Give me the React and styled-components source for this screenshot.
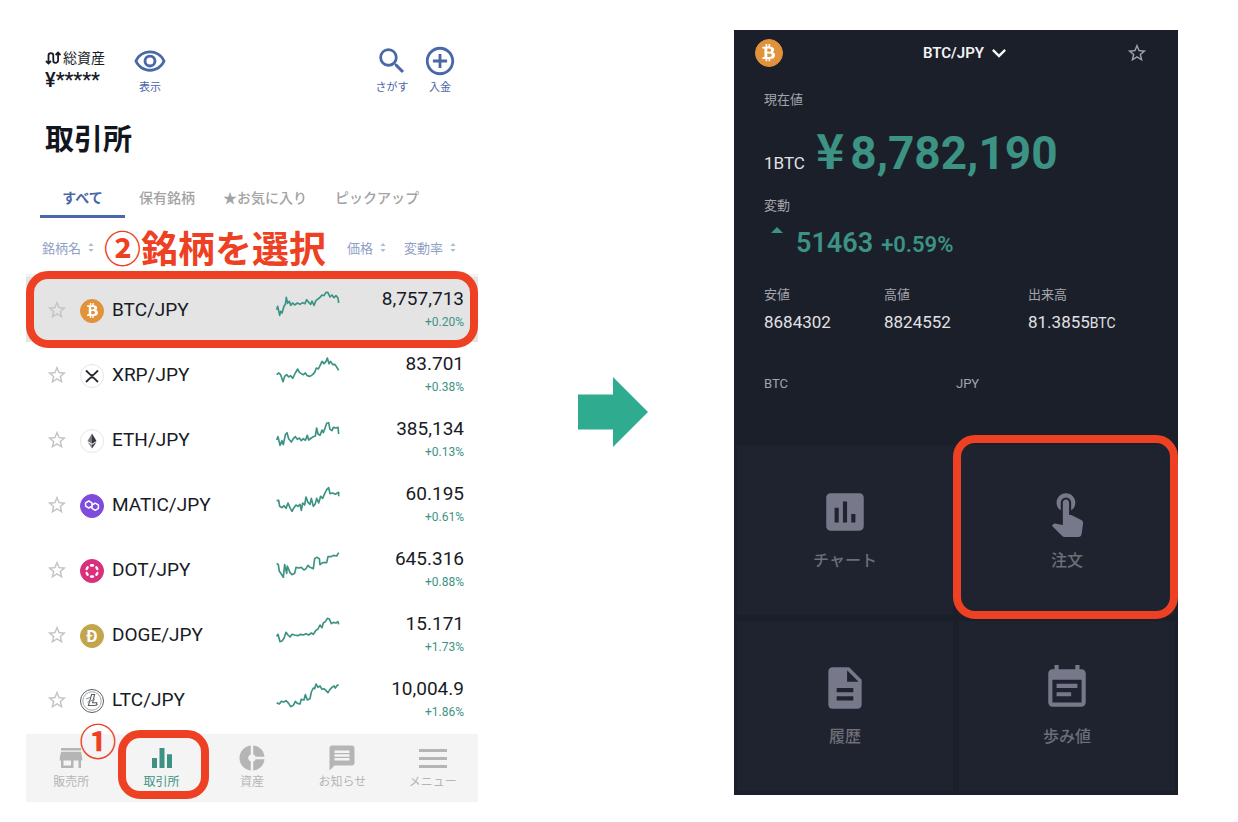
import React, { useState } from "react";
import styled, { createGlobalStyle } from "styled-components";
import {
  MdAssessment,
  MdDescription,
  MdDonutSmall,
  MdEqualizer,
  MdEventNote,
  MdKeyboardArrowDown,
  MdMessage,
  MdOutlineAddCircleOutline,
  MdOutlineRemoveRedEye,
  MdSearch,
  MdStarBorder,
  MdStore,
  MdTouchApp,
} from "react-icons/md";
import { FaBtc } from "react-icons/fa";

const GlobalStyle = createGlobalStyle`
  * {
    box-sizing: border-box;
  }
  body {
    margin: 0;
    background: #fff;
    color: #171b26;
    font-family: Roboto, "Noto Sans CJK JP", sans-serif;
  }
  button {
    margin: 0;
    padding: 0;
    border: none;
    background: none;
    color: inherit;
    font: inherit;
    cursor: pointer;
  }
  a {
    color: inherit;
    text-decoration: none;
  }
  svg {
    display: block;
  }
`;

const RED = "#ee4023";
const BLUE = "#4a67a8";
const GREEN = "#3c9384";

const Page = styled.main`
  display: grid;
  grid-template-columns: minmax(0, 452fr) minmax(0, 256fr) minmax(0, 444fr);
  align-items: start;
  padding: 30px 60px 20px 26px;
`;

// red frame drawn around the thing to press
const Ring = styled.span`
  position: absolute;
  z-index: 1;
  inset: ${(props) => props.$inset};
  border: 8px solid ${RED};
  border-radius: 22px;
  pointer-events: none;
`;

// css for the market list
const Market = styled.section`
  display: flex;
  flex-direction: column;
`;
const TopBar = styled.header`
  display: flex;
  align-items: flex-start;
  height: 88px;
  padding: 14px 18px 0 19px;
`;
const Assets = styled.div`
  width: 85px;
  padding-top: 2px;
`;
const AssetsLabel = styled.div`
  display: flex;
  align-items: center;
  gap: 2px;
  font-size: 14px;
  line-height: 24px;
`;
const AssetsValue = styled.div`
  font-size: 20px;
  font-weight: 500;
  line-height: 20px;
`;
const Tools = styled.div`
  display: flex;
  gap: 8px;
  margin-left: auto;
`;
const Tool = styled.button`
  display: flex;
  flex-direction: column;
  align-items: center;
  gap: 2px;
  width: 40px;
  color: ${BLUE};
  font-size: 11px;
  line-height: 16px;
  svg {
    width: 34px;
    height: 34px;
  }
`;
const Title = styled.h1`
  margin: 0;
  padding-left: 19px;
  color: #12151d;
  font-size: 29px;
  font-weight: 700;
  line-height: 44px;
`;
const Tabs = styled.nav`
  display: flex;
  padding: 18px 14px 0;
`;
const Tab = styled.button`
  height: 38px;
  padding: 0 14px 2px;
  color: ${(props) => (props.$active ? BLUE : "#a3a3a3")};
  border-bottom: 3px solid ${(props) => (props.$active ? BLUE : "transparent")};
  font-size: 14px;
  font-weight: ${(props) => (props.$active ? 700 : 500)};
  white-space: nowrap;
  &:first-child {
    min-width: 85px;
  }
`;
const SortRow = styled.div`
  position: relative;
  display: flex;
  align-items: center;
  gap: 18px;
  height: 59px;
  padding: 3px 22px 0 16px;
  border-bottom: 3px solid #f2f2f2;
`;
const Sort = styled.button`
  display: flex;
  align-items: center;
  gap: 7px;
  color: #8f9fc6;
  font-size: 13px;
  &:first-child {
    margin-right: auto;
  }
`;
const Step = styled.strong`
  position: absolute;
  z-index: 2;
  color: ${RED};
  font-size: 37px;
  font-weight: 700;
  line-height: 37px;
  white-space: nowrap;
`;
const StepTwo = styled(Step)`
  top: 14px;
  left: 78px;
`;
const StepOne = styled(Step)`
  top: -9px;
  right: 0;
`;
const List = styled.ul`
  margin: 0;
  padding: 0 0 2px;
  list-style: none;
`;
const Row = styled.li`
  position: relative;
  display: grid;
  grid-template-columns: 34px 24px minmax(0, 172fr) 64px minmax(0, 124fr);
  align-items: center;
  height: 65px;
  padding: 0 14px 0 20px;
  background: ${(props) => (props.$active ? "#e4e4e4" : "#fff")};
`;
const Star = styled.button`
  justify-self: start;
  color: ${(props) => props.$color};
`;
const Pair = styled.a`
  padding: 0 8px;
  font-size: 19px;
`;
const Spark = styled.svg`
  width: 64px;
  height: 28px;
  margin-bottom: 12px;
  fill: none;
  stroke: ${GREEN};
  stroke-width: 5;
  stroke-linejoin: round;
`;
const Quote = styled.div`
  text-align: right;
`;
const Price = styled.div`
  font-size: 19px;
  line-height: 24px;
`;
const Change = styled.div`
  color: ${GREEN};
  font-size: 12px;
  line-height: 22px;
`;
const BottomNav = styled.nav`
  display: grid;
  grid-template-columns: repeat(5, minmax(0, 1fr));
  height: 68px;
  background: #f4f4f4;
`;
const NavItem = styled.a`
  position: relative;
  display: flex;
  flex-direction: column;
  align-items: center;
  padding-top: 9px;
  color: ${(props) => (props.$active ? GREEN : "#b5b5b5")};
  font-size: 12px;
  line-height: 19px;
  white-space: nowrap;
  svg {
    width: 30px;
    height: 30px;
  }
`;
const Bars = styled.span`
  display: flex;
  flex-direction: column;
  justify-content: center;
  gap: 5px;
  width: 28px;
  height: 30px;
  i {
    height: 3px;
    background: currentColor;
  }
`;

const ArrowCell = styled.div`
  align-self: center;
  justify-self: center;
  padding: 0 0 8px 14px;
`;

// css for the pair detail
const Detail = styled.section`
  background: #1b1f2a;
  color: #e2e2e4;
`;
const DetailBar = styled.header`
  display: grid;
  grid-template-columns: 168fr auto 135fr;
  align-items: center;
  height: 46px;
  padding: 0 30px 0 21px;
`;
const PairSelect = styled.button`
  display: flex;
  align-items: center;
  gap: 1px;
  color: #f4f4f4;
  font-size: 15px;
  font-weight: 600;
`;
const DetailStar = styled(Star)`
  justify-self: end;
`;
const Body = styled.div`
  padding: 14px 20px 0 30px;
`;
const Label = styled.div`
  color: #a3a5ab;
  font-size: 13px;
  line-height: 20px;
`;
const Current = styled.div`
  display: flex;
  align-items: baseline;
  height: 72px;
  margin-bottom: 14px;
  padding-top: 11px;
  line-height: 84px;
`;
const Unit = styled.span`
  margin-right: 11px;
  font-size: 17px;
`;
const Yen = styled.span`
  margin-right: 6px;
  color: ${GREEN};
  font-family: "Noto Sans CJK JP", sans-serif;
  font-size: 48px;
  font-weight: 700;
  line-height: 48px;
`;
const Amount = styled.span`
  color: ${GREEN};
  font-size: 46px;
  font-weight: 700;
  line-height: 48px;
`;
const Move = styled.div`
  display: flex;
  align-items: baseline;
  gap: 8px;
  height: 55px;
  margin-bottom: 14px;
  padding-left: 7px;
  color: ${GREEN};
  font-size: 27px;
  font-weight: 600;
  line-height: 55px;
`;
const UpMark = styled.i`
  align-self: flex-start;
  width: 12px;
  height: 6px;
  margin: 11px 5px 0 0;
  background: ${GREEN};
  clip-path: polygon(50% 0, 100% 100%, 0 100%);
`;
const MoveRate = styled.span`
  font-size: 22px;
`;
const Stats = styled.div`
  display: grid;
  grid-template-columns: 120fr 144fr 130fr;
`;
const Stat = styled.div`
  font-size: 17px;
  line-height: 34px;
  small {
    font-size: 14px;
  }
`;
const Balances = styled.div`
  display: grid;
  grid-template-columns: 192fr 202fr;
  height: 105px;
  padding-top: 34px;
`;
const Tiles = styled.div`
  display: grid;
  grid-template-columns: repeat(2, minmax(0, 1fr));
  gap: 6px;
  padding: 0 3px 4px;
`;
const Tile = styled.a`
  position: relative;
  display: flex;
  flex-direction: column;
  align-items: center;
  justify-content: center;
  gap: 12px;
  height: 170px;
  background: #1f2330;
  color: #77798a;
  font-size: 16px;
  font-weight: 500;
  line-height: 24px;
  svg {
    width: 50px;
    height: 50px;
  }
`;
const TileLabel = styled.span`
  color: #6d6e77;
`;

const CoinDisc = styled.span`
  display: flex;
  align-items: center;
  justify-content: center;
  width: ${(props) => props.$size}px;
  height: ${(props) => props.$size}px;
  border: 1px solid ${(props) => props.$line || props.$bg};
  border-radius: 50%;
  background: ${(props) => props.$bg};
  color: #fff;
  font-size: 17px;
  font-weight: 700;
  line-height: 22px;
  ${Row} & {
    margin-top: 2px;
  }
`;

function Coin({ code, size = 24 }) {
  if (code === "BTC") {
    return (
      <CoinDisc $size={size} $bg="#e1923a">
        <FaBtc size={size * 0.62} />
      </CoinDisc>
    );
  }
  if (code === "XRP") {
    return (
      <CoinDisc $size={size} $bg="#fff" $line="#e6e6e6">
        <svg width="22" height="22" viewBox="0 0 22 22" fill="none" stroke="#23262d" strokeWidth="1.8">
          <path d="M5 5.5 9 9.4q2 1.8 4 0l4-3.9M5 17l4-3.9q2-1.8 4 0l4 3.9" />
        </svg>
      </CoinDisc>
    );
  }
  if (code === "ETH") {
    return (
      <CoinDisc $size={size} $bg="#fff" $line="#e6e6e6">
        <svg width="22" height="22" viewBox="0 0 22 22">
          <path d="M11 3.5 6.5 11 11 13.7z" fill="#77797f" />
          <path d="M11 3.5 15.5 11 11 13.7z" fill="#33363f" />
          <path d="M6.5 12 11 18.5v-3.8z" fill="#8b8d93" />
          <path d="M15.5 12 11 18.5v-3.8z" fill="#3a3d46" />
        </svg>
      </CoinDisc>
    );
  }
  if (code === "MATIC") {
    return (
      <CoinDisc $size={size} $bg="#7f4bdc">
        <svg width="22" height="22" viewBox="0 0 22 22" fill="none" stroke="#fff" strokeWidth="1.5" strokeLinejoin="round">
          <path d="M11 11.2 7.8 13 4.6 11.2V7.8L7.8 6 11 7.8v5.6l3.2 1.9 3.2-1.9V10l-3.2-1.8L11 10" />
        </svg>
      </CoinDisc>
    );
  }
  if (code === "DOT") {
    return (
      <CoinDisc $size={size} $bg="#d9307c">
        <svg width="22" height="22" viewBox="-11 -11 22 22" fill="#fff">
          {[0, 60, 120, 180, 240, 300].map((deg) => (
            <ellipse key={deg} cx="0" cy="-5.6" rx="2.3" ry="1.3" transform={`rotate(${deg})`} />
          ))}
        </svg>
      </CoinDisc>
    );
  }
  if (code === "DOGE") {
    return (
      <CoinDisc $size={size} $bg="#c3a54c">
        Ð
      </CoinDisc>
    );
  }
  return (
    <CoinDisc $size={size} $bg="#fff" $line="#5c5e63">
      <svg width="22" height="22" viewBox="0 0 22 22" fill="none">
        <circle cx="11" cy="11" r="9.2" stroke="#a5a7ab" strokeWidth="1" />
        <path d="M10.6 4.5h3l-2 8.3h4.2l-.7 2.7H7.4z" stroke="#5c5e63" strokeWidth="1.1" />
        <path d="m6.5 12.2 7.5-3M5 9l4-1.6M14 15.5l3-1.2" stroke="#8d8f94" strokeWidth="1" />
      </svg>
    </CoinDisc>
  );
}

function SortMark() {
  return (
    <svg width="6" height="9" viewBox="0 0 6 9" fill="#a9bfcd">
      <path d="M3 0 5.6 3H.4zM3 9 .4 6h5.2z" />
    </svg>
  );
}

const coins = [
  {
    code: "BTC",
    price: "8,757,713",
    change: "+0.20%",
    line: "2,59 5,49 8,62 11,76 14,64 18,69 24,49 28,43 31,22 35,40 40,34 44,46 50,39 56,45 64,39 72,43 80,38 87,41 92,29 98,37 104,43 108,33 114,46 120,31 126,27 132,22 138,15 144,17 150,7 156,8 162,21 168,15 174,23 180,17 186,24 188,39",
  },
  {
    code: "XRP",
    price: "83.701",
    change: "+0.38%",
    line: "2,59 8,54 14,59 21,80 26,64 32,59 38,66 44,62 50,70 58,54 65,42 70,52 76,56 82,59 88,54 94,62 102,64 110,59 116,52 121,39 127,42 132,32 138,19 144,26 150,19 154,9 159,26 164,19 170,29 176,28 182,36 188,46",
  },
  {
    code: "ETH",
    price: "385,134",
    change: "+0.13%",
    line: "2,60 6,50 12,76 18,62 22,74 28,44 33,38 38,56 46,66 52,56 58,50 64,58 70,54 76,62 82,56 88,61 94,46 98,60 106,54 112,50 118,48 122,24 126,42 132,46 138,30 142,38 148,22 152,10 158,8 162,28 168,32 172,22 180,24 186,22 188,42",
  },
  {
    code: "MATIC",
    price: "60.195",
    change: "+0.61%",
    line: "2,47 8,46 11,64 18,68 24,62 30,70 36,54 42,68 48,79 54,68 60,60 66,64 72,58 76,76 80,54 86,60 90,36 96,52 102,58 106,40 112,64 118,56 122,40 128,54 134,34 140,40 146,26 152,14 158,8 162,26 170,24 178,28 184,24 188,22 188,34",
  },
  {
    code: "DOT",
    price: "645.316",
    change: "+0.88%",
    line: "2,40 7,44 10,64 16,72 22,82 26,44 32,70 34,48 42,68 48,74 56,70 60,52 68,54 76,52 84,60 90,56 96,46 102,52 112,56 116,26 122,22 130,26 132,44 140,38 152,38 156,20 166,20 172,16 182,18 188,8",
  },
  {
    code: "DOGE",
    price: "15.171",
    change: "+1.73%",
    line: "2,64 6,58 12,80 18,78 24,70 30,52 36,60 42,66 48,58 56,60 66,62 74,58 82,60 90,56 98,60 106,54 112,58 120,46 126,42 132,30 138,38 142,24 148,20 154,10 160,12 166,26 172,22 180,24 186,20 188,28",
  },
  {
    code: "LTC",
    price: "10,004.9",
    change: "+1.86%",
    line: "2,68 10,72 16,64 24,66 30,62 38,70 44,80 52,76 58,64 64,70 72,72 76,58 84,60 88,44 94,60 102,56 106,36 112,24 116,26 120,12 126,22 132,18 138,28 144,26 150,32 156,38 162,28 168,22 174,18 178,24 184,16 188,14",
  },
];

const tabs = ["すべて", "保有銘柄", "★お気に入り", "ピックアップ"];

function MarketList() {
  const [tab, setTab] = useState(tabs[0]);

  return (
    <Market>
      <TopBar>
        <Assets>
          <AssetsLabel>
            <svg width="16" height="14" viewBox="0 0 16 14" fill="none" stroke="#171b26" strokeWidth="1.8">
              <path d="M3.5 11.5V4.5a2.4 2.4 0 0 1 4.8 0v5a2.4 2.4 0 0 0 4.8 0V2.5" />
              <path d="M1 10 3.5 12.5 6 10M10.6 4 13.1 1.5 15.6 4" />
            </svg>
            総資産
          </AssetsLabel>
          <AssetsValue>¥*****</AssetsValue>
        </Assets>
        <Tool type="button">
          <MdOutlineRemoveRedEye />
          表示
        </Tool>
        <Tools>
          <Tool type="button">
            <MdSearch />
            さがす
          </Tool>
          <Tool type="button">
            <MdOutlineAddCircleOutline />
            入金
          </Tool>
        </Tools>
      </TopBar>
      <Title>取引所</Title>
      <Tabs>
        {tabs.map((name) => (
          <Tab key={name} type="button" $active={name === tab} onClick={() => setTab(name)}>
            {name}
          </Tab>
        ))}
      </Tabs>
      <SortRow>
        <Sort type="button">
          銘柄名 <SortMark />
        </Sort>
        <Sort type="button">
          価格 <SortMark />
        </Sort>
        <Sort type="button">
          変動率 <SortMark />
        </Sort>
        <StepTwo>②銘柄を選択</StepTwo>
      </SortRow>
      <List>
        {coins.map((coin) => (
          <Row key={coin.code} $active={coin.code === "BTC"}>
            <Star type="button" aria-label="お気に入り" $color="#c4c4c4">
              <MdStarBorder size={22} />
            </Star>
            <Coin code={coin.code} />
            <Pair href="#">{coin.code}/JPY</Pair>
            <Spark viewBox="0 0 192 84">
              <polyline points={coin.line} />
            </Spark>
            <Quote>
              <Price>{coin.price}</Price>
              <Change>{coin.change}</Change>
            </Quote>
            {coin.code === "BTC" && <Ring $inset="-6px 0 -6px 0" />}
          </Row>
        ))}
      </List>
      <BottomNav>
        <NavItem href="#">
          <MdStore />
          販売所
          <StepOne>①</StepOne>
        </NavItem>
        <NavItem href="#" $active>
          <MdEqualizer />
          取引所
          <Ring $inset="-4px -2px 3px 2px" />
        </NavItem>
        <NavItem href="#">
          <MdDonutSmall />
          資産
        </NavItem>
        <NavItem href="#">
          <MdMessage />
          お知らせ
        </NavItem>
        <NavItem href="#">
          <Bars>
            <i />
            <i />
            <i />
          </Bars>
          メニュー
        </NavItem>
      </BottomNav>
    </Market>
  );
}

function PairDetail() {
  return (
    <Detail>
      <DetailBar>
        <Coin code="BTC" size={28} />
        <PairSelect type="button">
          BTC/JPY <MdKeyboardArrowDown size={28} />
        </PairSelect>
        <DetailStar type="button" aria-label="お気に入り" $color="#a0a1a6">
          <MdStarBorder size={22} />
        </DetailStar>
      </DetailBar>
      <Body>
        <Label>現在値</Label>
        <Current>
          <Unit>1BTC</Unit>
          <Yen>¥</Yen>
          <Amount>8,782,190</Amount>
        </Current>
        <Label>変動</Label>
        <Move>
          <UpMark />
          51463
          <MoveRate>+0.59%</MoveRate>
        </Move>
        <Stats>
          <Stat>
            <Label>安値</Label>
            8684302
          </Stat>
          <Stat>
            <Label>高値</Label>
            8824552
          </Stat>
          <Stat>
            <Label>出来高</Label>
            81.3855<small>BTC</small>
          </Stat>
        </Stats>
        <Balances>
          <Label>BTC</Label>
          <Label>JPY</Label>
        </Balances>
      </Body>
      <Tiles>
        <Tile href="#">
          <MdAssessment />
          <TileLabel>チャート</TileLabel>
        </Tile>
        <Tile href="#">
          <MdTouchApp />
          <TileLabel>注文</TileLabel>
          <Ring $inset="-10px -3px -4px -6px" />
        </Tile>
        <Tile href="#">
          <MdDescription />
          <TileLabel>履歴</TileLabel>
        </Tile>
        <Tile href="#">
          <MdEventNote />
          <TileLabel>歩み値</TileLabel>
        </Tile>
      </Tiles>
    </Detail>
  );
}

function App() {
  return (
    <>
      <GlobalStyle />
      <Page>
        <MarketList />
        <ArrowCell>
          <svg width="70" height="70" viewBox="0 0 70 70" fill="#2fab90">
            <path d="M0 17.5h35V0l35 35-35 35V52.5H0z" />
          </svg>
        </ArrowCell>
        <PairDetail />
      </Page>
    </>
  );
}

export default App;
